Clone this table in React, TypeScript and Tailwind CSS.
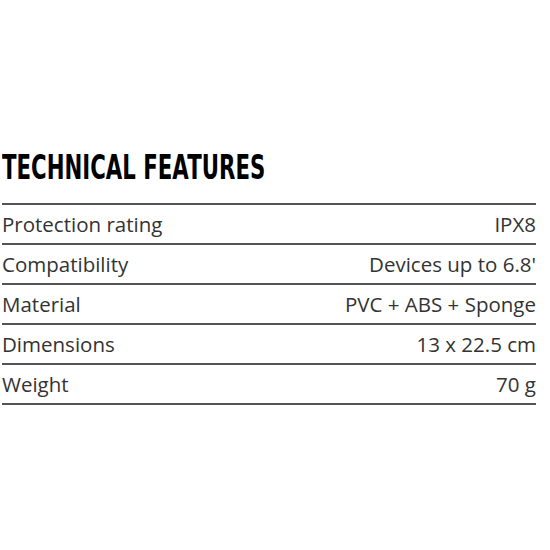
const rows: [string, string][] = [
  ["Protection rating", "IPX8"],
  ["Compatibility", "Devices up to 6.8'"],
  ["Material", "PVC + ABS + Sponge"],
  ["Dimensions", "13 x 22.5 cm"],
  ["Weight", "70 g"],
];

export default function App() {
  return (
    <div className="h-[550px] w-[550px] bg-white pl-[2px] pr-[14px] pt-[150px]">
      <h2 className="origin-left scale-x-[0.645] whitespace-nowrap font-['DejaVu_Sans',sans-serif] text-[33px] font-bold leading-[36px] text-black">
        TECHNICAL FEATURES
      </h2>
      <div className="mt-[17px] border-t-2 border-[#555]">
        {rows.map(([label, value]) => (
          <div
            key={label}
            className="flex h-[40px] items-center justify-between border-b-2 border-[#555] font-['Open_Sans',sans-serif] text-[20.5px] text-[#333]"
          >
            <span>{label}</span>
            <span>{value}</span>
          </div>
        ))}
      </div>
    </div>
  );
}
